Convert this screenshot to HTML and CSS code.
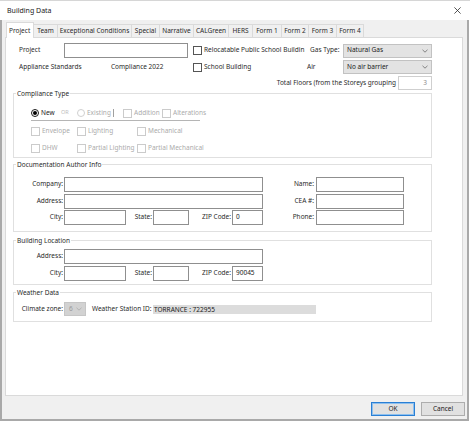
FILE: index.html
```html
<!DOCTYPE html>
<html>
<head>
<meta charset="utf-8">
<title>Building Data</title>
<link rel="stylesheet" href="styles.css">
</head>
<body>
<div class="window">
  <div class="titlebar">
    <span class="title">Building Data</span>
    <svg class="close" width="7" height="7" viewBox="0 0 7 7"><path d="M0.4 0.4L6.6 6.6M6.6 0.4L0.4 6.6" stroke="#2b2b2b" stroke-width="0.8" fill="none"/></svg>
  </div>
  <div class="frame">
    <div class="tabs">
      <div class="tab active">Project</div>
      <div class="tab">Team</div>
      <div class="tab">Exceptional Conditions</div>
      <div class="tab">Special</div>
      <div class="tab">Narrative</div>
      <div class="tab">CALGreen</div>
      <div class="tab">HERS</div>
      <div class="tab">Form 1</div>
      <div class="tab">Form 2</div>
      <div class="tab">Form 3</div>
      <div class="tab">Form 4</div>
    </div>
    <div class="panel">
      <div class="row r1">
        <span class="lbl w-project">Project</span>
        <div class="field w-projin"></div>
        <div class="chk w-reloc"><span class="box"></span><span class="ctext">Relocatable Public School Buildin</span></div>
        <span class="lbl w-gas">Gas Type:</span>
        <div class="select w-sel"><span>Natural Gas</span><svg class="chev" width="6" height="4" viewBox="0 0 6 4"><polyline points="0.5,0.8 3,3.2 5.5,0.8" fill="none" stroke="#6a6a6a" stroke-width="0.8"/></svg></div>
      </div>
      <div class="row r2">
        <span class="lbl w-appl">Appliance Standards</span>
        <span class="lbl w-comp">Compliance 2022</span>
        <div class="chk w-school"><span class="box"></span><span class="ctext">School Building</span></div>
        <span class="lbl w-air">Air</span>
        <div class="select w-sel"><span>No air barrier</span><svg class="chev" width="6" height="4" viewBox="0 0 6 4"><polyline points="0.5,0.8 3,3.2 5.5,0.8" fill="none" stroke="#6a6a6a" stroke-width="0.8"/></svg></div>
      </div>
      <div class="row r3">
        <span class="lbl floors-lbl">Total Floors (from the Storeys grouping</span>
        <div class="field floors">3</div>
      </div>

      <fieldset class="grp g-comp">
        <legend>Compliance Type</legend>
        <div class="comp-body">
          <div class="crow">
            <div class="opt w30"><svg class="radio" width="8" height="8" viewBox="0 0 8 8"><circle cx="4" cy="4" r="3.5" fill="#fff" stroke="#1a1a1a" stroke-width="1"/><circle cx="4" cy="4" r="2" fill="#000"/></svg><span class="otext on">New</span></div>
            <span class="or w16">OR</span>
            <div class="opt w36"><svg class="radio" width="8" height="8" viewBox="0 0 8 8"><circle cx="4" cy="4" r="3.5" fill="#fff" stroke="#cfcfcf" stroke-width="1"/></svg><span class="otext">Existing</span></div>
            <div class="sep w10"><span class="bar"></span></div>
            <div class="opt w39"><span class="box dis"></span><span class="otext">Addition</span></div>
            <div class="opt"><span class="box dis"></span><span class="otext">Alterations</span></div>
          </div>
          <div class="cline"></div>
          <div class="crow m5">
            <div class="opt w46"><span class="box dis"></span><span class="otext">Envelope</span></div>
            <div class="opt w60"><span class="box dis"></span><span class="otext">Lighting</span></div>
            <div class="opt"><span class="box dis"></span><span class="otext">Mechanical</span></div>
          </div>
          <div class="crow m7">
            <div class="opt w46"><span class="box dis"></span><span class="otext">DHW</span></div>
            <div class="opt w60"><span class="box dis"></span><span class="otext">Partial Lighting</span></div>
            <div class="opt"><span class="box dis"></span><span class="otext">Partial Mechanical</span></div>
          </div>
        </div>
      </fieldset>

      <fieldset class="grp g-doc">
        <legend>Documentation Author Info</legend>
        <div class="doc-body">
          <div class="frow">
            <span class="flbl lcol">Company:</span>
            <div class="field w199"></div>
            <span class="flbl rcol">Name:</span>
            <div class="field w88"></div>
          </div>
          <div class="frow">
            <span class="flbl lcol">Address:</span>
            <div class="field w199"></div>
            <span class="flbl rcol">CEA #:</span>
            <div class="field w88"></div>
          </div>
          <div class="frow">
            <span class="flbl lcol">City:</span>
            <div class="field w62"></div>
            <span class="flbl w27">State:</span>
            <div class="field w36"></div>
            <span class="flbl w43">ZIP Code:</span>
            <div class="field w31">0</div>
            <span class="flbl rcol">Phone:</span>
            <div class="field w88"></div>
          </div>
        </div>
      </fieldset>

      <fieldset class="grp g-loc">
        <legend>Building Location</legend>
        <div class="loc-body">
          <div class="frow">
            <span class="flbl lcol">Address:</span>
            <div class="field w199"></div>
          </div>
          <div class="frow m2">
            <span class="flbl lcol">City:</span>
            <div class="field w62"></div>
            <span class="flbl w27">State:</span>
            <div class="field w36"></div>
            <span class="flbl w43">ZIP Code:</span>
            <div class="field w31">90045</div>
          </div>
        </div>
      </fieldset>

      <fieldset class="grp g-wx">
        <legend>Weather Data</legend>
        <div class="wx-body">
          <div class="wrow">
            <span class="flbl lcol">Climate zone:</span>
            <div class="select dis w22"><span>6</span><svg class="chev" width="6" height="4" viewBox="0 0 6 4"><polyline points="0.5,0.8 3,3.2 5.5,0.8" fill="none" stroke="#a8a8a8" stroke-width="0.8"/></svg></div>
            <span class="lbl wsid">Weather Station ID:</span>
            <div class="wbar">TORRANCE : 722955</div>
          </div>
        </div>
      </fieldset>
    </div>
    <div class="footer">
      <div class="btn ok">OK</div>
      <div class="btn">Cancel</div>
    </div>
  </div>
</div>
</body>
</html>
```
FILE: styles.css
```css
* { box-sizing: border-box; }
html, body { margin: 0; padding: 0; }
body {
  width: 470px; height: 421px; overflow: hidden; background: #fff;
  font-family: "Noto Sans", "Liberation Sans", sans-serif;
  font-size: 6.5px; line-height: 1; color: #2a2a2a;
}
.window { width: 470px; height: 421px; display: flex; flex-direction: column; }
.titlebar {
  height: 20px; flex: none; display: flex; align-items: center; justify-content: space-between;
  padding: 0 9px 0 7px; background: #fff; border-top: 1px solid #d6d6d6;
}
.title { font-size: 7px; color: #1a1a1a; }
.close { display: block; }

.frame {
  flex: 1; min-height: 0; display: flex; flex-direction: column; background: #f0f0f0;
  border-left: 2px solid #a9a9a9; border-right: 2px solid #a9a9a9; border-bottom: 2px solid #a9a9a9;
  margin-right: 1px; padding: 0 2px 0 3px;
}

.tabs { height: 17px; flex: none; display: flex; align-items: flex-end; padding-left: 1px; }
.tab {
  height: 13px; line-height: 12px; text-align: center; white-space: nowrap; color: #2a2a2a;
  border: 1px solid #dadada; border-bottom: none; margin-left: -1px; background: #f0f0f0;
}
.tab.active {
  height: 16px; padding-top: 2px; background: #fff; margin-bottom: -1px; margin-left: 0;
  z-index: 1; text-align: left; padding-left: 2px;
}
.tab:nth-child(1) { width: 28px; }
.tab:nth-child(2) { width: 25px; }
.tab:nth-child(3) { width: 75px; }
.tab:nth-child(4) { width: 29px; }
.tab:nth-child(5) { width: 35px; }
.tab:nth-child(6) { width: 36px; }
.tab:nth-child(7) { width: 25px; }
.tab:nth-child(8) { width: 30px; }
.tab:nth-child(9) { width: 28px; }
.tab:nth-child(10) { width: 29px; }
.tab:nth-child(11) { width: 28px; }

.panel {
  flex: 1; min-height: 0; background: #fff; border: 1px solid #dadada;
  margin-right: 2px; padding: 5px 0 0 7px;
}

.row { display: flex; align-items: center; padding-left: 6px; }
.r1 { height: 15px; }
.r2 { height: 14px; margin-top: 2px; }
.r3 { height: 14px; margin-top: 2px; justify-content: flex-end; padding-right: 30px; }
.lbl { white-space: nowrap; flex: none; }
.w-project { width: 45px; }
.w-projin { width: 124px; height: 15px; }
.w-reloc { width: 117px; margin-left: 5px; }
.w-gas { width: 33px; }
.w-sel { width: 89px; height: 14px; }
.w-appl { width: 92px; }
.w-comp { width: 82px; }
.w-school { width: 114px; }
.w-air { width: 36px; }
.floors-lbl { margin-right: 2px; }
.field.floors { width: 34px; height: 14px; justify-content: flex-end; padding-right: 4px; color: #8a8a8a; border-color: #cfcfcf; }

.field {
  flex: none; display: flex; align-items: center; height: 15px;
  border: 1px solid #8f8f8f; background: #fff; padding-left: 2px; color: #1a1a1a;
}
.select {
  flex: none; display: flex; align-items: center; justify-content: space-between;
  background: #e3e3e3; border: 1px solid #c2c2c2; padding: 0 3px 0 3px; color: #1a1a1a;
}
.select.dis { background: #d2d2d2; border-color: #c6c6c6; color: #9a9a9a; padding: 0 3px 0 4px; }
.chev { display: block; }

.chk { display: flex; align-items: center; flex: none; }
.box { width: 9px; height: 9px; border: 1px solid #555; background: #fff; flex: none; display: block; }
.box.dis { border-color: #cbcbcb; }
.ctext { margin-left: 2px; white-space: nowrap; }

.grp { margin: 0; padding: 0; border: 1px solid #e0e0e0; width: 419px; min-width: 0; }
.grp legend { padding: 0 1px; margin-left: 2px; height: 9px; line-height: 9px; color: #2a2a2a; }
.g-comp { margin-top: -1px; }
.g-doc { margin-top: 2px; }
.g-loc { margin-top: 4px; }
.g-wx { margin-top: 3px; }

.comp-body { padding: 10px 0 4px 17px; }
.crow { display: flex; align-items: center; height: 10px; }
.crow.m5 { margin-top: 5px; }
.crow.m7 { margin-top: 7px; }
.cline { margin-top: 2px; width: 169px; height: 1px; background: #b5b5b5; }
.opt { display: flex; align-items: center; flex: none; color: #ababab; }
.opt .otext { margin-left: 2px; white-space: nowrap; }
.opt .otext.on { color: #1a1a1a; }
.radio { display: block; flex: none; }
.or { font-size: 5.5px; color: #bdbdbd; flex: none; }
.sep { display: flex; align-items: center; flex: none; }
.sep .bar { display: block; width: 1px; height: 8px; background: #a0a0a0; }
.w10 { width: 10px; }
.w16 { width: 16px; }
.w30 { width: 30px; }
.w36 { width: 36px; }
.w39 { width: 39px; }
.w46 { width: 46px; }
.w60 { width: 60px; }

.doc-body { padding: 8px 0 6px 0; }
.loc-body { padding: 4px 0 3px 0; }
.wx-body { padding: 5px 0 5px 0; }
.frow { display: flex; align-items: center; height: 15px; }
.doc-body .frow + .frow { margin-top: 1.5px; }
.frow.m2 { margin-top: 2px; }
.flbl { flex: none; text-align: right; white-space: nowrap; padding-right: 1px; }
.lcol { width: 50px; }
.rcol { width: 53px; padding-right: 2px; }
.w27 { width: 27px; }
.w43 { width: 43px; }
.w199 { width: 199px; }
.w88 { width: 88px; }
.w62 { width: 62px; }
.w36.field { width: 36px; }
.w31 { width: 31px; padding-left: 3px; }
.w22 { width: 22px; height: 14px; }

.wrow { display: flex; align-items: center; height: 14px; }
.wsid { margin-left: 6px; width: 61px; }
.wbar { width: 163px; height: 9px; background: #dcdcdc; line-height: 9px; padding-left: 1px; color: #1a1a1a; white-space: nowrap; }

.footer {
  height: 23px; flex: none; display: flex; justify-content: flex-end; align-items: flex-start;
  padding-top: 6px; gap: 6px;
}
.btn {
  width: 44px; height: 14px; display: flex; align-items: center; justify-content: center;
  background: #e1e1e1; border: 1px solid #adadad; color: #1a1a1a;
}
.btn.ok { border-color: #2a7fd4; box-shadow: inset 0 0 0 1px #8ec0ee; }
```
